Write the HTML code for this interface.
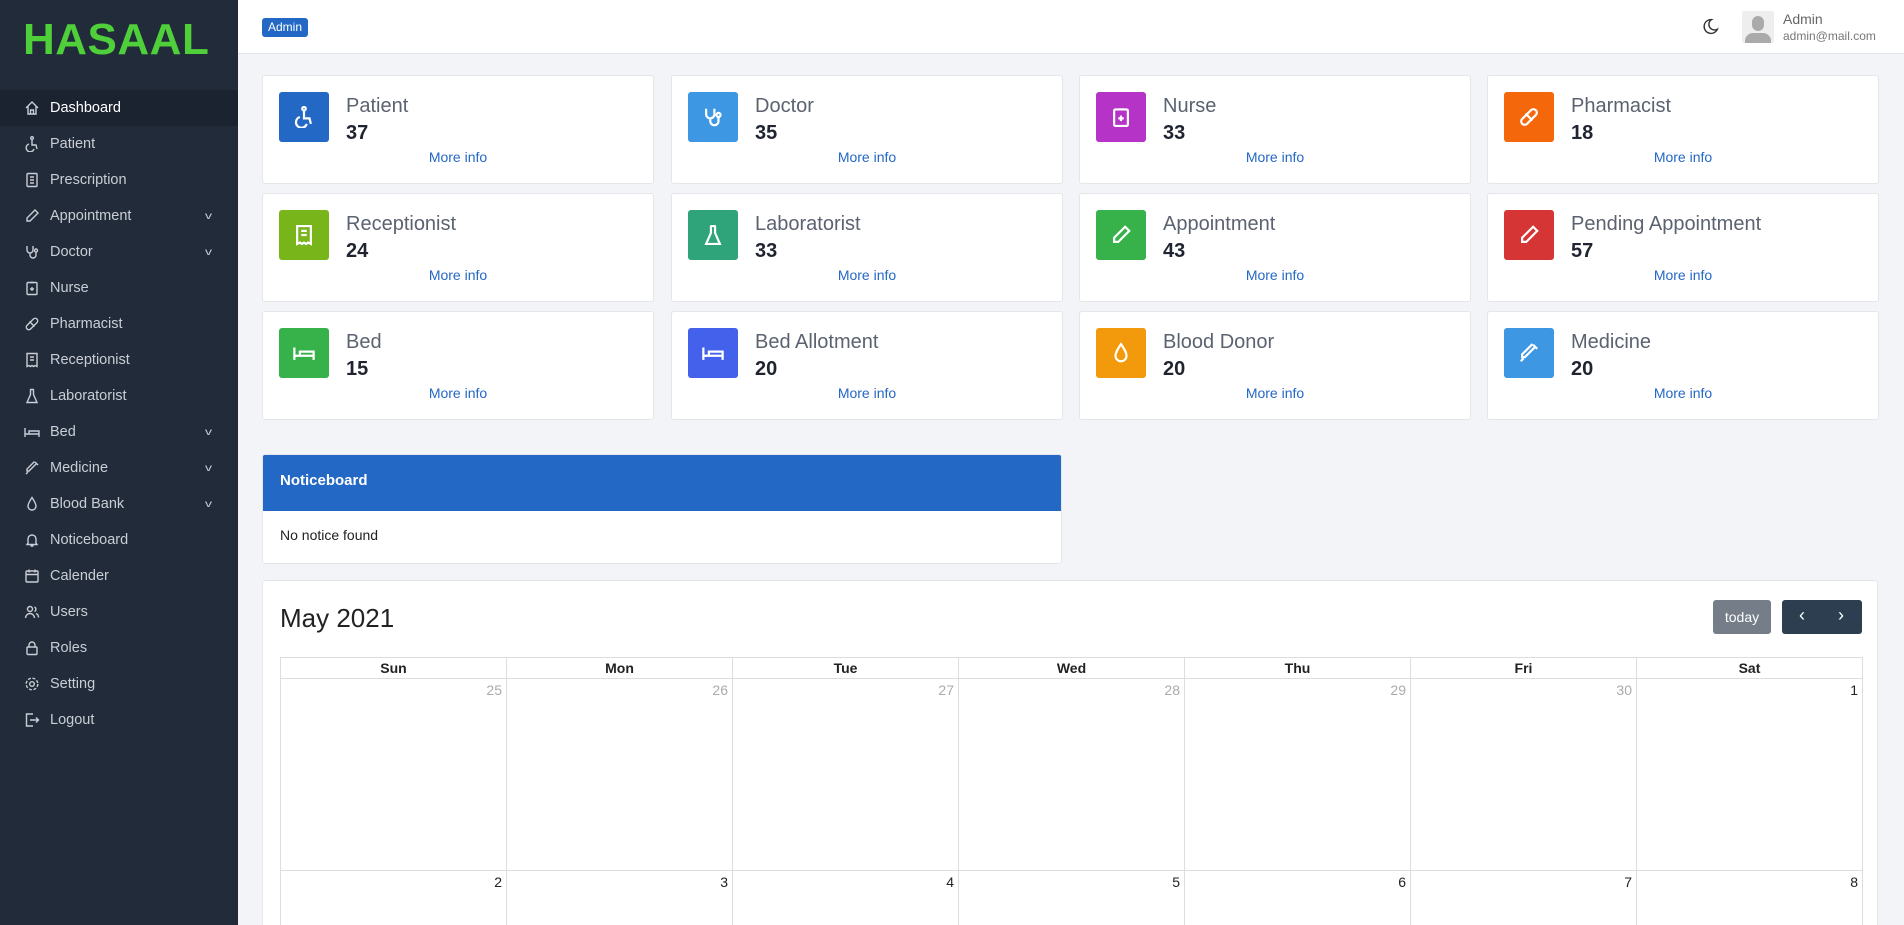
<!DOCTYPE html>
<html><head><meta charset="utf-8"><style>
*{box-sizing:border-box;margin:0;padding:0}
html,body{width:1904px;height:925px;overflow:hidden}
body{background:#f3f4f7;font-family:"Liberation Sans",sans-serif;position:relative}
.sb{position:absolute;left:0;top:0;width:238px;height:925px;background:#222b3a}
.logo{position:absolute;left:23px;top:15px;font-size:44px;font-weight:bold;color:#4fcf3a;letter-spacing:0.5px}
.nav{position:absolute;left:0;top:90px;width:238px}
.nav div{height:36px;display:flex;align-items:center;color:#c9ced6;font-size:14.5px;position:relative}
.nav div.act{background:#1b2230;color:#fff}
.nav svg{position:absolute;left:24px;width:16px;height:16px;fill:none;stroke:#c9ced6;stroke-width:1.4}
.nav span{position:absolute;left:50px}
.nav i{position:absolute;left:206px;font-style:normal;font-size:10px;transform:scaleX(1.4)}
.hd{position:absolute;left:238px;top:0;right:0;height:54px;background:#fff;border-bottom:1px solid #e3e6ea}
.badge{position:absolute;left:24px;top:18px;width:46px;height:19px;background:#2468c5;color:#fff;border-radius:3px;font-size:12px;line-height:19px;text-align:center}
.card{position:absolute;background:#fff;border:1px solid #e4e6ea;border-radius:3px;width:392px;height:109px}
.ic{position:absolute;left:16px;top:16px;width:50px;height:50px;border-radius:3px;display:flex;align-items:center;justify-content:center}
.ic svg{width:22px;height:22px;fill:none;stroke:#fff;stroke-width:1.6}
.t{position:absolute;left:83px;top:19px;font-size:20px;color:#5b6270}
.n{position:absolute;left:83px;top:46px;font-size:20px;font-weight:bold;color:#1f2430}
.m{position:absolute;left:0;right:0;top:73px;text-align:center;font-size:14px;color:#2468c5}
</style></head><body>
<div class="sb"><div class="logo">HASAAL</div>
<div class="nav">
<div class="act"><svg viewBox="0 0 16 16"><path d="M2 8L8 2l6 6M4 6v8h8V6M6.5 14v-4h3v4"/></svg><span>Dashboard</span></div>
<div><svg viewBox="0 0 16 16"><circle cx="8" cy="2" r="1.3"/><path d="M8 4v5h4l1 4M5 8a4 4 0 1 0 5 5"/></svg><span>Patient</span></div>
<div><svg viewBox="0 0 16 16"><rect x="3" y="1.5" width="10" height="13" rx="1"/><path d="M6 5h4M6 8h4M6 11h4"/></svg><span>Prescription</span></div>
<div><svg viewBox="0 0 16 16"><path d="M11 2l3 3-8 8H3v-3z"/></svg><span>Appointment</span><i>v</i></div>
<div><svg viewBox="0 0 16 16"><path d="M3 2v4a3 3 0 0 0 6 0V2M6 9v2a3 3 0 0 0 6 0V8"/><circle cx="12" cy="6.5" r="1.5"/></svg><span>Doctor</span><i>v</i></div>
<div><svg viewBox="0 0 16 16"><rect x="3" y="2.5" width="10" height="12" rx="1"/><path d="M8 7v4M6 9h4M6 2.5h4"/></svg><span>Nurse</span></div>
<div><svg viewBox="0 0 16 16"><rect x="1" y="5.5" width="14" height="5" rx="2.5" transform="rotate(-45 8 8)"/><path d="M5.5 5.5l5 5"/></svg><span>Pharmacist</span></div>
<div><svg viewBox="0 0 16 16"><path d="M3 1.5h10v13l-2-1-1.5 1-1.5-1-1.5 1-1.5-1-2 1zM6 5h4M6 8h4"/></svg><span>Receptionist</span></div>
<div><svg viewBox="0 0 16 16"><path d="M6 1.5h4M6.5 1.5v5L3 14.5h10L9.5 6.5v-5"/></svg><span>Laboratorist</span></div>
<div><svg viewBox="0 0 16 16"><path d="M1 4v9M1 10h14v3M5 10V7h10v3"/></svg><span>Bed</span><i>v</i></div>
<div><svg viewBox="0 0 16 16"><path d="M11 2l3 3M12.5 3.5L5 11l-2-0 0-2 7.5-7.5M2 14l2-2"/></svg><span>Medicine</span><i>v</i></div>
<div><svg viewBox="0 0 16 16"><path d="M8 1.5C5 6 4 8 4 10a4 4 0 0 0 8 0c0-2-1-4-4-8.5z"/></svg><span>Blood Bank</span><i>v</i></div>
<div><svg viewBox="0 0 16 16"><path d="M4 11V7a4 4 0 0 1 8 0v4l1 1.5H3zM6.5 14h3"/></svg><span>Noticeboard</span></div>
<div><svg viewBox="0 0 16 16"><rect x="2" y="3" width="12" height="11" rx="1"/><path d="M2 6.5h12M5 1.5v3M11 1.5v3"/></svg><span>Calender</span></div>
<div><svg viewBox="0 0 16 16"><circle cx="6" cy="5" r="2.5"/><path d="M1.5 14a4.5 4.5 0 0 1 9 0M10.5 3a2.5 2.5 0 0 1 0 4.5M12 9.5a4 4 0 0 1 2.5 4"/></svg><span>Users</span></div>
<div><svg viewBox="0 0 16 16"><rect x="3" y="7" width="10" height="7.5" rx="1"/><path d="M5 7V5a3 3 0 0 1 6 0v2"/></svg><span>Roles</span></div>
<div><svg viewBox="0 0 16 16"><circle cx="8" cy="8" r="2.3"/><circle cx="8" cy="8" r="5.8" stroke-dasharray="3 1.6"/></svg><span>Setting</span></div>
<div><svg viewBox="0 0 16 16"><path d="M9 2H2.5v12H9M6 8h8.5M12 5.5L14.5 8 12 10.5"/></svg><span>Logout</span></div>
</div></div>
<div class="hd"><div class="badge">Admin</div>
<svg style="position:absolute;left:1464px;top:18px" width="17" height="17" viewBox="0 0 16 16" fill="none" stroke="#333" stroke-width="1.3"><path d="M9 1.5a6.5 6.5 0 1 0 5.5 9A5 5 0 0 1 9 1.5z"/></svg>
<div style="position:absolute;left:1504px;top:11px;width:32px;height:32px;background:#eee;border-radius:2px;overflow:hidden"><div style="position:absolute;left:10px;top:5px;width:12px;height:15px;border-radius:6px;background:#aaa"></div><div style="position:absolute;left:3px;top:22px;width:26px;height:14px;border-radius:8px 8px 0 0;background:#aaa"></div></div>
<div style="position:absolute;left:1545px;top:11px;font-size:14px;color:#666">Admin</div>
<div style="position:absolute;left:1545px;top:29px;font-size:12px;color:#777">admin@mail.com</div>
</div>

<div class="card" style="left:262px;top:75px"><div class="ic" style="background:#2468c5"><svg viewBox="0 0 16 16"><circle cx="8" cy="2" r="1.3"/><path d="M8 4v5h4l1 4M5 8a4 4 0 1 0 5 5"/></svg></div><div class="t">Patient</div><div class="n">37</div><div class="m">More info</div></div>
<div class="card" style="left:671px;top:75px"><div class="ic" style="background:#3e97e3"><svg viewBox="0 0 16 16"><path d="M3 2v4a3 3 0 0 0 6 0V2M6 9v2a3 3 0 0 0 6 0V8"/><circle cx="12" cy="6.5" r="1.5"/></svg></div><div class="t">Doctor</div><div class="n">35</div><div class="m">More info</div></div>
<div class="card" style="left:1079px;top:75px"><div class="ic" style="background:#b533c7"><svg viewBox="0 0 16 16"><rect x="3" y="2.5" width="10" height="12" rx="1"/><path d="M8 7v4M6 9h4M6 2.5h4"/></svg></div><div class="t">Nurse</div><div class="n">33</div><div class="m">More info</div></div>
<div class="card" style="left:1487px;top:75px"><div class="ic" style="background:#f4670b"><svg viewBox="0 0 16 16"><rect x="1" y="5.5" width="14" height="5" rx="2.5" transform="rotate(-45 8 8)"/><path d="M5.5 5.5l5 5"/></svg></div><div class="t">Pharmacist</div><div class="n">18</div><div class="m">More info</div></div>

<div class="card" style="left:262px;top:193px"><div class="ic" style="background:#78b51a"><svg viewBox="0 0 16 16"><path d="M3 1.5h10v13l-2-1-1.5 1-1.5-1-1.5 1-1.5-1-2 1zM6 5h4M6 8h4"/></svg></div><div class="t">Receptionist</div><div class="n">24</div><div class="m">More info</div></div>
<div class="card" style="left:671px;top:193px"><div class="ic" style="background:#2fa37a"><svg viewBox="0 0 16 16"><path d="M6 1.5h4M6.5 1.5v5L3 14.5h10L9.5 6.5v-5"/></svg></div><div class="t">Laboratorist</div><div class="n">33</div><div class="m">More info</div></div>
<div class="card" style="left:1079px;top:193px"><div class="ic" style="background:#37b14a"><svg viewBox="0 0 16 16"><path d="M11 2l3 3-8 8H3v-3z"/></svg></div><div class="t">Appointment</div><div class="n">43</div><div class="m">More info</div></div>
<div class="card" style="left:1487px;top:193px"><div class="ic" style="background:#d63535"><svg viewBox="0 0 16 16"><path d="M11 2l3 3-8 8H3v-3z"/></svg></div><div class="t">Pending Appointment</div><div class="n">57</div><div class="m">More info</div></div>

<div class="card" style="left:262px;top:311px"><div class="ic" style="background:#37b14a"><svg viewBox="0 0 16 16"><path d="M1 4v9M1 10h14v3M5 10V7h10v3"/></svg></div><div class="t">Bed</div><div class="n">15</div><div class="m">More info</div></div>
<div class="card" style="left:671px;top:311px"><div class="ic" style="background:#4361ea"><svg viewBox="0 0 16 16"><path d="M1 4v9M1 10h14v3M5 10V7h10v3"/></svg></div><div class="t">Bed Allotment</div><div class="n">20</div><div class="m">More info</div></div>
<div class="card" style="left:1079px;top:311px"><div class="ic" style="background:#f29a0b"><svg viewBox="0 0 16 16"><path d="M8 1.5C5 6 4 8 4 10a4 4 0 0 0 8 0c0-2-1-4-4-8.5z"/></svg></div><div class="t">Blood Donor</div><div class="n">20</div><div class="m">More info</div></div>
<div class="card" style="left:1487px;top:311px"><div class="ic" style="background:#3e97e3"><svg viewBox="0 0 16 16"><path d="M11 2l3 3M12.5 3.5L5 11H3V9l7.5-7.5M2 14l2-2"/></svg></div><div class="t">Medicine</div><div class="n">20</div><div class="m">More info</div></div>

<div style="position:absolute;left:262px;top:454px;width:800px;height:110px;background:#fff;border:1px solid #e4e6ea;border-radius:3px;overflow:hidden">
<div style="height:56px;background:#2468c5;color:#fff;font-size:15px;font-weight:bold;padding:17px 0 0 17px">Noticeboard</div>
<div style="padding:16px 0 0 17px;font-size:14px;color:#222">No notice found</div></div>

<div style="position:absolute;left:262px;top:580px;width:1616px;height:345px;background:#fff;border:1px solid #e4e6ea;border-bottom:none;border-radius:3px 3px 0 0;overflow:hidden">
<div style="position:absolute;left:17px;top:22px;font-size:26px;color:#222">May 2021</div>
<div style="position:absolute;left:1450px;top:19px;width:58px;height:34px;background:#757d89;border-radius:3px;color:#fff;font-size:14px;text-align:center;line-height:34px">today</div>
<div style="position:absolute;left:1519px;top:19px;width:80px;height:34px;background:#2c3e50;border-radius:3px;color:#fff;font-size:18px"><span style="position:absolute;left:17px;top:5px">‹</span><span style="position:absolute;left:56px;top:5px">›</span></div>
<table style="position:absolute;left:17px;top:76px;width:1583px;border-collapse:collapse;font-size:14px;table-layout:fixed">
<tr style="height:21px;font-weight:bold;color:#222"><td style="border:1px solid #ddd;text-align:center">Sun</td><td style="border:1px solid #ddd;text-align:center">Mon</td><td style="border:1px solid #ddd;text-align:center">Tue</td><td style="border:1px solid #ddd;text-align:center">Wed</td><td style="border:1px solid #ddd;text-align:center">Thu</td><td style="border:1px solid #ddd;text-align:center">Fri</td><td style="border:1px solid #ddd;text-align:center">Sat</td></tr>
<tr style="height:192px;vertical-align:top;text-align:right;color:#aaa"><td style="border:1px solid #ddd;padding:3px 4px">25</td><td style="border:1px solid #ddd;padding:3px 4px">26</td><td style="border:1px solid #ddd;padding:3px 4px">27</td><td style="border:1px solid #ddd;padding:3px 4px">28</td><td style="border:1px solid #ddd;padding:3px 4px">29</td><td style="border:1px solid #ddd;padding:3px 4px">30</td><td style="border:1px solid #ddd;padding:3px 4px;color:#222">1</td></tr>
<tr style="height:100px;vertical-align:top;text-align:right;color:#222"><td style="border:1px solid #ddd;padding:3px 4px">2</td><td style="border:1px solid #ddd;padding:3px 4px">3</td><td style="border:1px solid #ddd;padding:3px 4px">4</td><td style="border:1px solid #ddd;padding:3px 4px">5</td><td style="border:1px solid #ddd;padding:3px 4px">6</td><td style="border:1px solid #ddd;padding:3px 4px">7</td><td style="border:1px solid #ddd;padding:3px 4px">8</td></tr>
</table></div>
</body></html>
